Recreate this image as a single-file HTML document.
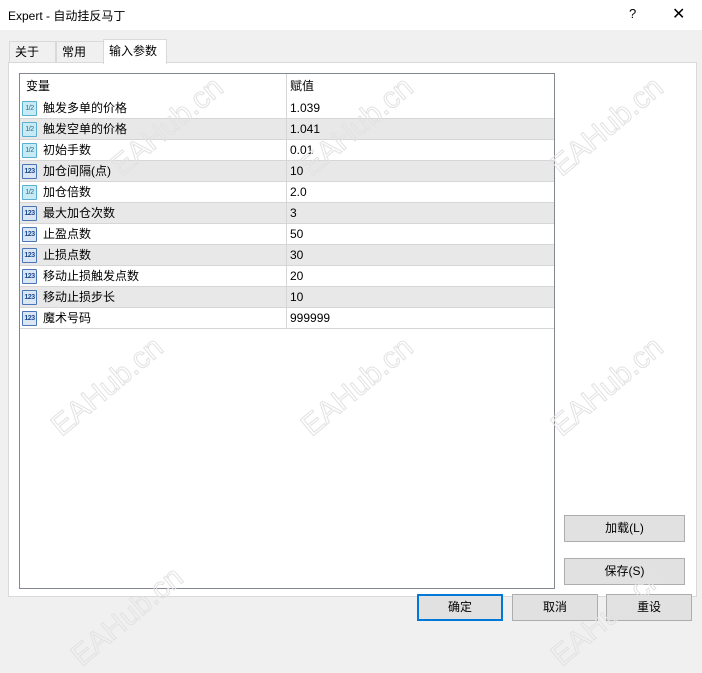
<!DOCTYPE html>
<html><head><meta charset="utf-8"><style>
*{margin:0;padding:0;box-sizing:border-box}
html,body{width:702px;height:634px}
body{background:#f0f0f0;font-family:"Liberation Sans","Microsoft YaHei","Noto Sans CJK SC",sans-serif;font-size:12px;color:#000;position:relative;overflow:hidden}
.abs{position:absolute}
.title{left:0;top:0;width:702px;height:30px;background:#fff}
.tab{top:41px;height:22px;border:1px solid #d9d9d9;border-bottom:none;background:#f0f0f0;line-height:20px;padding-left:5px}
.panel{left:8px;top:62px;width:689px;height:535px;background:#fff;border:1px solid #d9d9d9}
.list{left:19px;top:73px;width:536px;height:516px;border:1px solid #828790;background:#fff}
.row{position:absolute;left:0;width:534px;height:21px;border-bottom:1px solid #d6d6d6;line-height:21px}
.row.g{background:#e8e8e8}
.row .n{position:absolute;left:23px}
.row .v{position:absolute;left:270px}
.row .d{position:absolute;left:266px;top:0;height:21px;border-left:1px solid #d6d6d6}
.ic{position:absolute;left:2px;top:3px;width:15px;height:15px;border-radius:1px;font-size:7px;font-style:normal;line-height:13px;text-align:center;font-family:"Liberation Sans",sans-serif;letter-spacing:-0.5px}
.ic.a{background:#c8eaf4;border:1px solid #5ab0d0;color:#2a6e90}
.ic.b{background:#dbe6f5;border:1px solid #4a76b8;color:#1d4a90;font-weight:bold}
.btn{height:27px;background:#e1e1e1;border:1px solid #adadad;text-align:center;line-height:25px}
.wm{color:transparent;-webkit-text-stroke:1px #e2e2e2;font-size:30px;transform:rotate(-40deg);white-space:nowrap;font-family:"Liberation Sans",sans-serif;z-index:5}
</style></head><body>
<div class="abs title"></div>
<div class="abs" style="left:8px;top:7px;font-size:12px">Expert - 自动挂反马丁</div>
<div class="abs" style="left:629px;top:6px;font-size:13px">?</div>
<div class="abs" style="left:672px;top:4px;font-size:16px">✕</div>
<div class="abs tab" style="left:9px;width:47px">关于</div>
<div class="abs tab" style="left:56px;width:48px">常用</div>
<div class="abs panel"></div>
<div class="abs tab" style="left:103px;top:39px;width:64px;height:25px;background:#fff;line-height:22px">输入参数</div>
<div class="abs list">
<div class="row" style="top:0;height:25px;line-height:24px;border-bottom:none"><span class="n" style="left:6px">变量</span><span class="d" style="height:25px"></span><span class="v">赋值</span></div>
<div class="row" style="top:24px"><i class="ic a">1/2</i><span class="n">触发多单的价格</span><span class="d"></span><span class="v">1.039</span></div>
<div class="row g" style="top:45px"><i class="ic a">1/2</i><span class="n">触发空单的价格</span><span class="d"></span><span class="v">1.041</span></div>
<div class="row" style="top:66px"><i class="ic a">1/2</i><span class="n">初始手数</span><span class="d"></span><span class="v">0.01</span></div>
<div class="row g" style="top:87px"><i class="ic b">123</i><span class="n">加仓间隔(点)</span><span class="d"></span><span class="v">10</span></div>
<div class="row" style="top:108px"><i class="ic a">1/2</i><span class="n">加仓倍数</span><span class="d"></span><span class="v">2.0</span></div>
<div class="row g" style="top:129px"><i class="ic b">123</i><span class="n">最大加仓次数</span><span class="d"></span><span class="v">3</span></div>
<div class="row" style="top:150px"><i class="ic b">123</i><span class="n">止盈点数</span><span class="d"></span><span class="v">50</span></div>
<div class="row g" style="top:171px"><i class="ic b">123</i><span class="n">止损点数</span><span class="d"></span><span class="v">30</span></div>
<div class="row" style="top:192px"><i class="ic b">123</i><span class="n">移动止损触发点数</span><span class="d"></span><span class="v">20</span></div>
<div class="row g" style="top:213px"><i class="ic b">123</i><span class="n">移动止损步长</span><span class="d"></span><span class="v">10</span></div>
<div class="row" style="top:234px"><i class="ic b">123</i><span class="n">魔术号码</span><span class="d"></span><span class="v">999999</span></div>
</div>
<div class="abs btn" style="left:564px;top:515px;width:121px">加载(L)</div>
<div class="abs btn" style="left:564px;top:558px;width:121px">保存(S)</div>
<div class="abs btn" style="left:417px;top:594px;width:86px;border:2px solid #0078d7;line-height:23px">确定</div>
<div class="abs btn" style="left:512px;top:594px;width:86px">取消</div>
<div class="abs btn" style="left:606px;top:594px;width:86px">重设</div>
<div class="abs wm" style="left:100px;top:110px">EAHub.cn</div>
<div class="abs wm" style="left:290px;top:110px">EAHub.cn</div>
<div class="abs wm" style="left:540px;top:110px">EAHub.cn</div>
<div class="abs wm" style="left:40px;top:370px">EAHub.cn</div>
<div class="abs wm" style="left:290px;top:370px">EAHub.cn</div>
<div class="abs wm" style="left:540px;top:370px">EAHub.cn</div>
<div class="abs wm" style="left:60px;top:600px">EAHub.cn</div>
<div class="abs wm" style="left:540px;top:600px">EAHub.cn</div>
</body></html>
